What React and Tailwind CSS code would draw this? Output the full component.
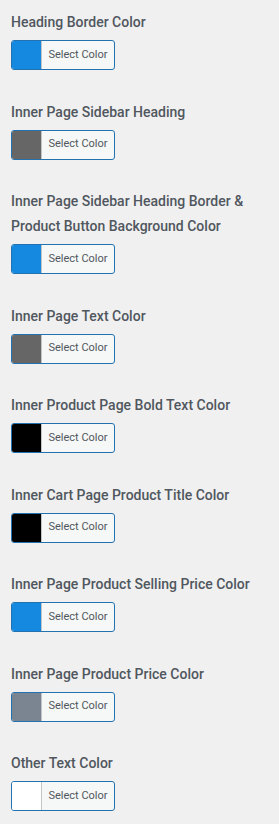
import React from "react";

const fields = [
  { label: "Heading Border Color", color: "#1589e0" },
  { label: "Inner Page Sidebar Heading", color: "#666666" },
  {
    label: "Inner Page Sidebar Heading Border & Product Button Background Color",
    color: "#1589e0",
  },
  { label: "Inner Page Text Color", color: "#666666" },
  { label: "Inner Product Page Bold Text Color", color: "#000000" },
  { label: "Inner Cart Page Product Title Color", color: "#000000" },
  { label: "Inner Page Product Selling Price Color", color: "#1589e0" },
  { label: "Inner Page Product Price Color", color: "#7a8591" },
  { label: "Other Text Color", color: "#ffffff" },
];

function ColorField({ label, color }) {
  return (
    <div>
      <h3 className="text-[14px] font-medium leading-[25px] text-[#50575e]">{label}</h3>
      <button
        type="button"
        className="mt-[5px] flex h-[30px] w-[104px] overflow-hidden rounded-[3px] border border-[#2271b1] bg-[#f6f7f7]"
      >
        <span className="h-full w-[30px] shrink-0 border-r border-[#c3c4c7]" style={{ backgroundColor: color }} />
        <span className="flex flex-1 items-center justify-center text-[11px] text-[#50575e]">Select Color</span>
      </button>
    </div>
  );
}

export default function App() {
  return (
    <main
      className="min-h-screen bg-[#f0f0f1] px-[11px] pt-[10px]"
      style={{ fontFamily: "Roboto, 'Noto Sans', sans-serif" }}
    >
      <div className="flex flex-col gap-[29.5px]">
        {fields.map((f) => (
          <ColorField key={f.label} {...f} />
        ))}
      </div>
    </main>
  );
}
